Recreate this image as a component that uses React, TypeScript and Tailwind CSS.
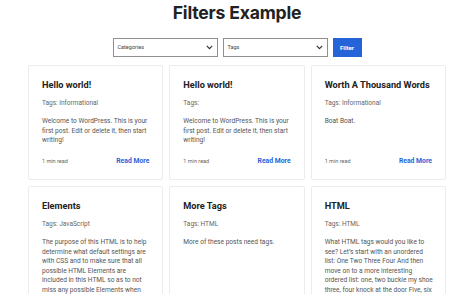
import React from "react";

type Post = { title: string; tags: string; body: string[]; footer: boolean };

const posts: Post[] = [
  { title: "Hello world!", tags: "Tags: Informational", body: ["Welcome to WordPress. This is your", "first post. Edit or delete it, then start", "writing!"], footer: true },
  { title: "Hello world!", tags: "Tags:", body: ["Welcome to WordPress. This is your", "first post. Edit or delete it, then start", "writing!"], footer: true },
  { title: "Worth A Thousand Words", tags: "Tags: Informational", body: ["Boat Boat."], footer: true },
  { title: "Elements", tags: "Tags: JavaScript", body: ["The purpose of this HTML is to help", "determine what default settings are", "with CSS and to make sure that all", "possible HTML Elements are", "included in this HTML so as to not", "miss any possible Elements when"], footer: false },
  { title: "More Tags", tags: "Tags: HTML", body: ["More of these posts need tags."], footer: false },
  { title: "HTML", tags: "Tags: HTML", body: ["What HTML tags would you like to", "see? Let’s start with an unordered", "list: One Two Three Four And then", "move on to a more interesting", "ordered list: one, two buckle my shoe", "three, four knock at the door Five, six"], footer: false },
];

function Chevron() {
  return (
    <svg width="7" height="5" viewBox="0 0 7 5" fill="none">
      <path d="M0.8 0.9 L3.5 3.6 L6.2 0.9" stroke="#333" strokeWidth="1.2" />
    </svg>
  );
}

function Select({ label, w }: { label: string; w: string }) {
  return (
    <div className={`${w} h-[19px] border border-[#8f8f8f] bg-white flex items-center justify-between pl-[4px] pr-[4px]`}>
      <span className="text-[5.5px] text-[#444]">{label}</span>
      <Chevron />
    </div>
  );
}

export default function App() {
  return (
    <div className="w-[474px] h-[294px] overflow-hidden bg-white text-[#222]" style={{ fontFamily: "Roboto, 'Liberation Sans', sans-serif" }}>
      <h1 className="text-center text-[17.6px] font-bold leading-[23px] pt-[1px] text-[#222] tracking-[-0.2px]" style={{ fontFamily: "Inter, sans-serif" }}>Filters Example</h1>
      <div className="flex justify-center items-center gap-[5px] mt-[14px]">
        <Select label="Categories" w="w-[105px]" />
        <Select label="Tags" w="w-[105px]" />
        <button className="w-[29px] h-[19px] bg-[#2563d9] text-white text-[6px] font-bold">Filter</button>
      </div>
      <div className="grid grid-cols-3 gap-[6px] mx-[28px] mt-[8px]">
        {posts.map((p, i) => (
          <div key={i} className="border border-[#ececec] rounded-[2px] px-[13px] pt-[12px] pb-[13px] flex flex-col min-h-[115px]">
            <div className="text-[9.2px] font-bold leading-[14px] text-[#222] whitespace-nowrap">{p.title}</div>
            <div className="text-[6.5px] leading-[10px] text-[#666] mt-[6px]">{p.tags}</div>
            <div className="text-[6.6px] leading-[9.6px] text-[#555] mt-[9px]">
              {p.body.map((l, j) => (
                <div key={j} className="whitespace-nowrap">{l}</div>
              ))}
            </div>
            {p.footer && (
              <div className="mt-auto flex justify-between items-center pt-[8px]">
                <span className="text-[5.5px] text-[#666]">1 min read</span>
                <span className="text-[6.8px] font-bold text-[#2563d9]">Read More</span>
              </div>
            )}
          </div>
        ))}
      </div>
    </div>
  );
}
